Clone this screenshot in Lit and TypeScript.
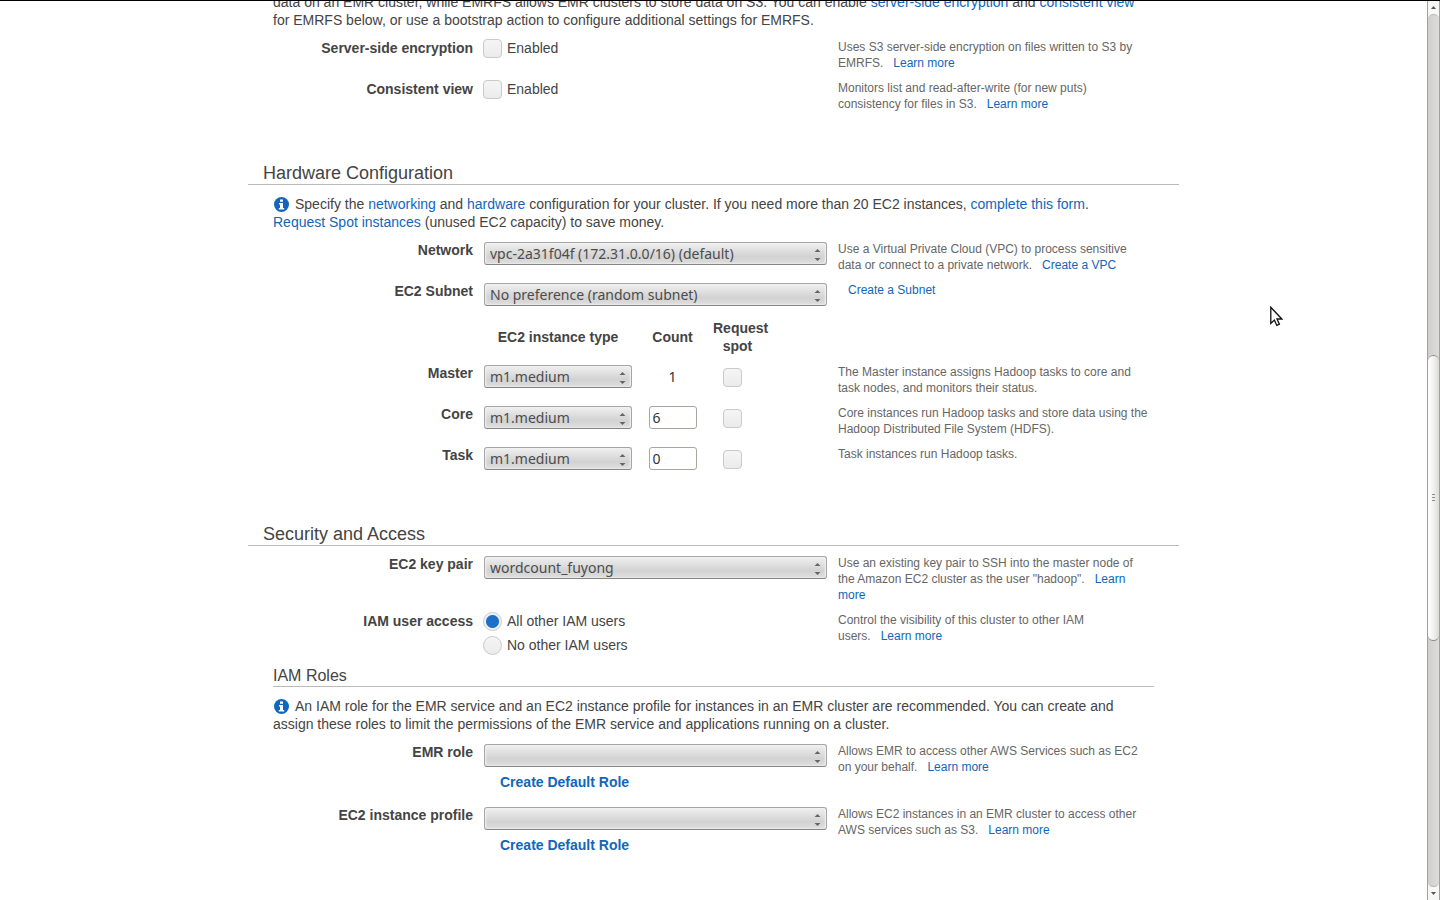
import { LitElement, html, css, svg, nothing, type TemplateResult } from "lit";
import { customElement, property } from "lit/decorators.js";

const base = css`
  :host {
    box-sizing: border-box;
  }
  *,
  *::before,
  *::after {
    box-sizing: border-box;
  }
  a {
    color: #1166bb;
    text-decoration: none;
  }
  a:hover {
    text-decoration: underline;
  }
  .select {
    display: block;
    position: relative;
    height: 23px;
    margin-top: 1px;
  }
  .select select {
    appearance: none;
    display: block;
    width: 100%;
    height: 23px;
    margin: 0;
    padding: 0 24px 0 5px;
    border: 1px solid #a6a6a6;
    border-bottom-color: #858585;
    border-radius: 3px;
    background: linear-gradient(#f0f0f0 0%, #e2e2e2 30%, #d2d2d2 65%, #dedede 100%);
    box-shadow: inset 1px 0 2px #f2f2f2, inset -1px 0 2px #f2f2f2;
    color: #4c4c4c;
    font: 14px/20px "Noto Sans", sans-serif;
  }
  .select .arrows {
    position: absolute;
    right: 6px;
    top: 7px;
    width: 7px;
    height: 12px;
    pointer-events: none;
  }
  .box {
    appearance: none;
    flex: none;
    display: block;
    width: 19px;
    height: 19px;
    margin: 0;
    border: 1px solid #cacaca;
    border-radius: 4px;
    background: linear-gradient(#f5f5f5, #ebebeb);
  }
  .box:checked {
    background: #1a6fc9;
  }
  .box.round {
    border-radius: 50%;
  }
  .box.round:checked {
    background: radial-gradient(circle, #1c70c8 0 6px, #f2f2f2 7px);
  }
  .help {
    margin: 0;
    padding-right: 5px;
    font-size: 12px;
    line-height: 16px;
    color: #666;
  }
  .help a {
    margin-left: 10px;
  }
`;

const picker = (id: string, value: string, label?: string) => html`
  <span class="select">
    <select id=${id} aria-label=${label ?? nothing}>
      <option>${value}</option>
    </select>
    <svg class="arrows" viewBox="0 0 7 12" aria-hidden="true">
      <path d="M0.5 3 3.5 0 6.5 3zM0.5 9 3.5 12 6.5 9z" fill="#666" />
    </svg>
  </span>
`;

const infoIcon = html`<svg class="info-icon" viewBox="0 0 15 15" aria-hidden="true">
  ${svg`<circle cx="7.5" cy="7.5" r="7.5" fill="#1166bb" />
  <path d="M6 2.4h3v2.4H6zM5 6h4v5h1.2v1.5H4.8V11H6V7.5H5z" fill="#fff" />`}
</svg>`;

@customElement("form-row")
class FormRow extends LitElement {
  @property() label = "";
  @property({ attribute: false }) control: TemplateResult | typeof nothing = nothing;
  @property({ attribute: false }) help: TemplateResult | typeof nothing = nothing;
  @property() target = "";

  static styles = [
    base,
    css`
      :host {
        display: grid;
        grid-template-columns: 200px 343px minmax(0, 1fr);
        column-gap: 11px;
        min-height: 27px;
      }
      .label {
        font-weight: bold;
        text-align: right;
      }
      .choice {
        display: flex;
        gap: 5px;
        margin: 0 0 5px -1px;
        line-height: 18px;
      }
      .choice:last-child {
        margin-bottom: 0;
      }
      .default-role {
        display: block;
        margin: 6px 0 6px 16px;
        font-weight: bold;
      }
    `,
  ];

  render() {
    return html`
      ${this.target
        ? html`<label class="label" for=${this.target}>${this.label}</label>`
        : html`<span class="label">${this.label}</span>`}
      <div class="control">${this.control}</div>
      <p class="help">${this.help}</p>
    `;
  }
}

@customElement("page-scrollbar")
class PageScrollbar extends LitElement {
  static styles = css`
    :host {
      display: flex;
      flex-direction: column;
      flex: none;
      box-sizing: border-box;
      width: 13px;
      border: 1px solid #a3a09c;
      border-width: 0 1px;
      background: #f5f5f4;
    }
    .step {
      flex: none;
      display: flex;
      align-items: center;
      justify-content: center;
      width: 11px;
      height: 13px;
      padding: 0;
      border: 0;
      border-radius: 6px;
      background: #f8f8f7;
    }
    .step svg {
      width: 5px;
      height: 3px;
    }
    .track {
      flex: 1;
      display: flex;
      flex-direction: column;
      border: 1px solid #b5b2ae;
      border-width: 1px 0;
      border-radius: 6px;
      background: linear-gradient(90deg, #d0cfcd, #dddcda);
    }
    .before {
      flex: 341;
    }
    .thumb {
      flex: 285;
      display: flex;
      flex-direction: column;
      align-items: center;
      justify-content: center;
      gap: 2px;
      border: 1px solid #8f8d8a;
      border-width: 1px 0;
      border-radius: 6px;
      background: linear-gradient(90deg, #fff, #f5f5f4 40%, #dcdbd9);
    }
    .grip {
      width: 3px;
      height: 1px;
      background: #8c8c8c;
    }
    .after {
      flex: 246;
    }
  `;

  render() {
    return html`
      <button class="step" aria-label="Scroll up">
        <svg viewBox="0 0 5 3"><path d="M0 3 2.5 0 5 3z" fill="#555" /></svg>
      </button>
      <div class="track">
        <div class="before"></div>
        <div class="thumb">
          <span class="grip"></span><span class="grip"></span><span class="grip"></span>
        </div>
        <div class="after"></div>
      </div>
      <button class="step" aria-label="Scroll down">
        <svg viewBox="0 0 5 3"><path d="M0 0 2.5 3 5 0z" fill="#555" /></svg>
      </button>
    `;
  }
}

interface InstanceGroup {
  name: string;
  id: string;
  count: number;
  fixed?: boolean;
  help: string;
}

const groups: InstanceGroup[] = [
  {
    name: "Master",
    id: "master",
    count: 1,
    fixed: true,
    help: "The Master instance assigns Hadoop tasks to core and task nodes, and monitors their status.",
  },
  {
    name: "Core",
    id: "core",
    count: 6,
    help: "Core instances run Hadoop tasks and store data using the Hadoop Distributed File System (HDFS).",
  },
  { name: "Task", id: "task", count: 0, help: "Task instances run Hadoop tasks." },
];

@customElement("app-root")
class AppRoot extends LitElement {
  static styles = [
    base,
    css`
      :host {
        display: flex;
        height: 100vh;
        overflow: hidden;
        border-top: 1px solid #000;
        background: #fff;
        color: #444;
        font: 14px/18px "Liberation Sans", Arial, sans-serif;
      }
      .page {
        flex: 1;
        min-width: 0;
        overflow: hidden;
      }
      .content {
        width: 100%;
        max-width: 931px;
        margin: -9px auto 0;
      }
      .body {
        display: flex;
        flex-direction: column;
        gap: 9px;
        padding: 0 25px;
      }
      h2 {
        margin: 0 0 9px;
        padding-left: 15px;
        border-bottom: 1px solid #bbb;
        font-size: 18px;
        line-height: 22px;
        font-weight: normal;
      }
      h3 {
        margin: 3px 0 0;
        padding-bottom: 1px;
        border-bottom: 1px solid #bbb;
        font-size: 16px;
        line-height: 18px;
        font-weight: normal;
      }
      section {
        margin-bottom: 50px;
      }
      .intro {
        margin: 1px 0;
        padding-right: 15px;
      }
      .info-icon {
        width: 15px;
        height: 15px;
        margin: 0 6px 0 1px;
        vertical-align: -3px;
      }
      .instances {
        width: 100%;
        border-collapse: collapse;
        table-layout: fixed;
      }
      .instances th,
      .instances td {
        padding: 0 0 9px;
        vertical-align: top;
      }
      .instances tbody tr:last-child > * {
        height: 27px;
        padding-bottom: 0;
      }
      .instances thead th {
        height: 46px;
        vertical-align: middle;
      }
      .instances .name {
        width: 200px;
        text-align: right;
      }
      .instances .type {
        width: 159px;
        padding-left: 11px;
      }
      .instances .count {
        width: 81px;
        text-align: center;
      }
      .instances .spot {
        width: 125px;
        padding-top: 4px;
        padding-left: 10px;
      }
      .instances thead .spot {
        padding-top: 0;
        padding-left: 0;
        padding-right: 76px;
      }
      .fixed-count,
      .count-input {
        display: block;
        margin: 1px auto 0;
        font: 14px/23px "Noto Sans", sans-serif;
        color: #333;
      }
      .count-input {
        width: 48px;
        height: 23px;
        padding: 0 3px;
        border: 1px solid #aaa59f;
        border-radius: 3px;
        background: #fff;
        line-height: 20px;
      }
      .pointer {
        position: absolute;
        left: 1270px;
        top: 306px;
        width: 13px;
        height: 21px;
        pointer-events: none;
      }
    `,
  ];

  private check(id: string) {
    return html`<span class="choice"
      ><input class="box" type="checkbox" id=${id} /><label for=${id}>Enabled</label></span
    >`;
  }

  private role(id: string) {
    return html`${picker(id, "")}<a class="default-role" href="#">Create Default Role</a>`;
  }

  render() {
    return html`
      <main class="page">
        <div class="content">
          <section>
            <div class="body">
              <p class="intro">
                data on an EMR cluster, while EMRFS allows EMR clusters to store data on S3. You can enable
                <a href="#">server-side encryption</a> and <a href="#">consistent view</a> for EMRFS below, or use a
                bootstrap action to configure additional settings for EMRFS.
              </p>
              <form-row
                label="Server-side encryption"
                .control=${this.check("sse")}
                .help=${html`Uses S3 server-side encryption on files written to S3 by EMRFS.<a href="#">Learn more</a>`}
              ></form-row>
              <form-row
                label="Consistent view"
                .control=${this.check("view")}
                .help=${html`Monitors list and read-after-write (for new puts) consistency for files in S3.<a href="#"
                    >Learn more</a
                  >`}
              ></form-row>
            </div>
          </section>

          <section>
            <h2>Hardware Configuration</h2>
            <div class="body">
              <p class="intro">
                ${infoIcon}Specify the <a href="#">networking</a> and <a href="#">hardware</a> configuration for your
                cluster. If you need more than 20 EC2 instances, <a href="#">complete this form</a>.
                <a href="#">Request Spot instances</a> (unused EC2 capacity) to save money.
              </p>
              <form-row
                label="Network"
                target="network"
                .control=${picker("network", "vpc-2a31f04f (172.31.0.0/16) (default)")}
                .help=${html`Use a Virtual Private Cloud (VPC) to process sensitive data or connect to a private
                  network.<a href="#">Create a VPC</a>`}
              ></form-row>
              <form-row
                label="EC2 Subnet"
                target="subnet"
                .control=${picker("subnet", "No preference (random subnet)")}
                .help=${html`<a href="#">Create a Subnet</a>`}
              ></form-row>
              <table class="instances">
                <thead>
                  <tr>
                    <td class="name"></td>
                    <th class="type">EC2 instance type</th>
                    <th class="count">Count</th>
                    <th class="spot">Request spot</th>
                    <td></td>
                  </tr>
                </thead>
                <tbody>
                  ${groups.map(
                    (g) => html`<tr>
                      <th class="name" scope="row">${g.name}</th>
                      <td class="type">${picker(`${g.id}-type`, "m1.medium", `${g.name} instance type`)}</td>
                      <td class="count">
                        ${g.fixed
                          ? html`<span class="fixed-count">${g.count}</span>`
                          : html`<input class="count-input" aria-label="${g.name} count" .value=${String(g.count)} />`}
                      </td>
                      <td class="spot">
                        <input class="box" type="checkbox" aria-label="${g.name} request spot" />
                      </td>
                      <td><p class="help">${g.help}</p></td>
                    </tr>`
                  )}
                </tbody>
              </table>
            </div>
          </section>

          <section>
            <h2>Security and Access</h2>
            <div class="body">
              <form-row
                label="EC2 key pair"
                target="keypair"
                .control=${picker("keypair", "wordcount_fuyong")}
                .help=${html`Use an existing key pair to SSH into the master node of the Amazon EC2 cluster as the user
                  "hadoop".<a href="#">Learn more</a>`}
              ></form-row>
              <form-row
                label="IAM user access"
                .control=${html`<span class="choice"
                    ><input class="box round" type="radio" name="access" id="all" checked /><label for="all"
                      >All other IAM users</label
                    ></span
                  ><span class="choice"
                    ><input class="box round" type="radio" name="access" id="none" /><label for="none"
                      >No other IAM users</label
                    ></span
                  >`}
                .help=${html`Control the visibility of this cluster to other IAM users.<a href="#">Learn more</a>`}
              ></form-row>
              <h3>IAM Roles</h3>
              <p class="intro">
                ${infoIcon}An IAM role for the EMR service and an EC2 instance profile for instances in an EMR cluster
                are recommended. You can create and assign these roles to limit the permissions of the EMR service and
                applications running on a cluster.
              </p>
              <form-row
                label="EMR role"
                target="emr-role"
                .control=${this.role("emr-role")}
                .help=${html`Allows EMR to access other AWS Services such as EC2 on your behalf.<a href="#"
                    >Learn more</a
                  >`}
              ></form-row>
              <form-row
                label="EC2 instance profile"
                target="profile"
                .control=${this.role("profile")}
                .help=${html`Allows EC2 instances in an EMR cluster to access other AWS services such as S3.<a href="#"
                    >Learn more</a
                  >`}
              ></form-row>
            </div>
          </section>
        </div>
      </main>
      <page-scrollbar></page-scrollbar>
      <svg class="pointer" viewBox="0 0 13 21" aria-hidden="true">
        <path
          d="M0.8 1.2V17.4L4.4 14 6.8 19.4 9.4 18.2 7 13H11.8z"
          fill="#fff"
          stroke="#111"
          stroke-width="1.3"
        />
      </svg>
    `;
  }
}
